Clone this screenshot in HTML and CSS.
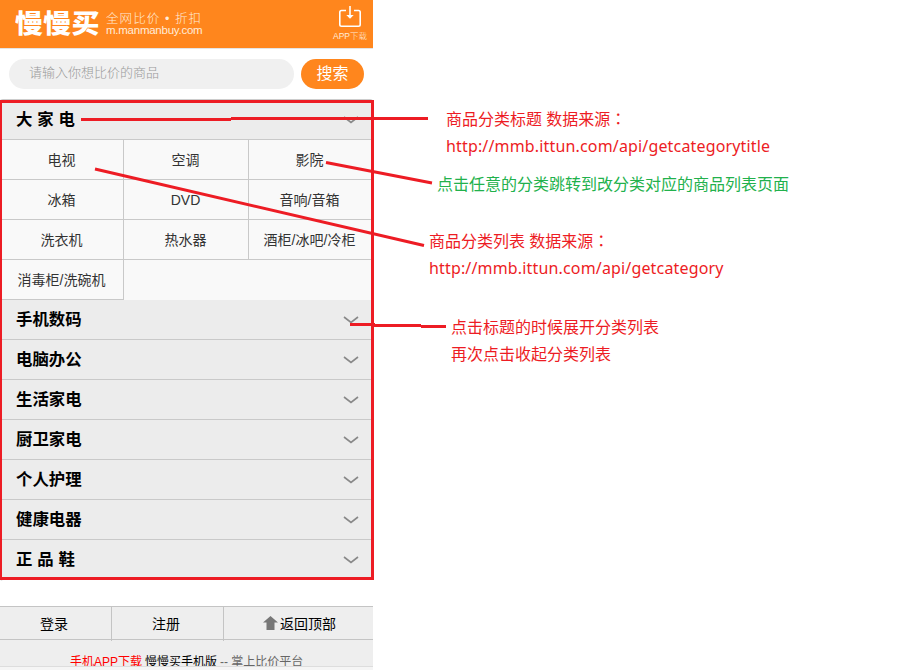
FILE: index.html
```html
<!DOCTYPE html>
<html lang="zh-CN">
<head>
<meta charset="utf-8">
<title>慢慢买</title>
<link rel="stylesheet" href="styles.css">
</head>
<body>
<div class="phone">
  <header class="top">
    <div class="logo">慢慢买</div>
    <div class="slogan"><div class="slogan-cn">全网比价 • 折扣</div><div class="slogan-en">m.manmanbuy.com</div></div>
    <div class="app">
      <svg width="24" height="24" viewBox="0 0 24 24" fill="none" stroke="#fff" stroke-width="1.6"><path d="M8 5.500H3.500Q1.800 5.500 1.800 7.200V19.500Q1.800 21.200 3.500 21.200H20.500Q22.200 21.200 22.200 19.500V7.200Q22.200 5.500 20.500 5.500H16"/><path d="M12 1V12"/><path d="M8.300 10H15.700L12 13.800Z" fill="#fff" stroke="none"/></svg>
      <div class="app-text">APP下载</div>
    </div>
  </header>
  <div class="search"><div class="field">请输入你想比价的商品</div><div class="button">搜索</div></div>
  <main class="categories">
    <div class="title"><span class="spaced">大 家 电</span><svg class="chevron" width="16" height="8" viewBox="0 0 16 8"><path d="M1 1L8 6.500L15 1"/></svg></div>
    <div class="grid">
      <div class="cell">电视</div><div class="cell">空调</div><div class="cell wide">影院</div>
      <div class="cell">冰箱</div><div class="cell">DVD</div><div class="cell wide">音响/音箱</div>
      <div class="cell">洗衣机</div><div class="cell">热水器</div><div class="cell wide">酒柜/冰吧/冷柜</div>
      <div class="cell">消毒柜/洗碗机</div>
    </div>
    <div class="title"><span>手机数码</span><svg class="chevron" width="16" height="8" viewBox="0 0 16 8"><path d="M1 1L8 6.500L15 1"/></svg></div>
    <div class="title"><span>电脑办公</span><svg class="chevron" width="16" height="8" viewBox="0 0 16 8"><path d="M1 1L8 6.500L15 1"/></svg></div>
    <div class="title"><span>生活家电</span><svg class="chevron" width="16" height="8" viewBox="0 0 16 8"><path d="M1 1L8 6.500L15 1"/></svg></div>
    <div class="title"><span>厨卫家电</span><svg class="chevron" width="16" height="8" viewBox="0 0 16 8"><path d="M1 1L8 6.500L15 1"/></svg></div>
    <div class="title"><span>个人护理</span><svg class="chevron" width="16" height="8" viewBox="0 0 16 8"><path d="M1 1L8 6.500L15 1"/></svg></div>
    <div class="title"><span>健康电器</span><svg class="chevron" width="16" height="8" viewBox="0 0 16 8"><path d="M1 1L8 6.500L15 1"/></svg></div>
    <div class="title"><span class="spaced">正 品 鞋</span><svg class="chevron" width="16" height="8" viewBox="0 0 16 8"><path d="M1 1L8 6.500L15 1"/></svg></div>
  </main>
  <footer class="footer">
    <nav class="links">
      <div class="link">登录</div><div class="link">注册</div>
      <div class="link last"><svg width="16" height="14" viewBox="0 0 16 14"><path d="M7.500 0L15 6.500H11.500V14H3.500V6.500H0Z" fill="#777"/></svg>返回顶部</div>
    </nav>
    <div class="download"><span class="red">手机APP下载</span><span class="brand">慢慢买手机版</span><span class="note">-- 掌上比价平台</span></div>
    <div class="edge"></div>
  </footer>
</div>
<svg class="marks" width="921" height="670" viewBox="0 0 921 670">
  <rect x="0.500" y="101.500" width="372" height="477"/>
  <path d="M81 119.500H231M231 118.500H428M95 169L424 245.500M326 162.500L432 183M350 324.500H375M374 325.500H421M421 326.500H446"/>
</svg>
<div class="notes note-title"><span>商品分类标题 数据来源<span class="colon" lang="zh-TW">：</span></span><span class="url">http://mmb.ittun.com/api/getcategorytitle</span></div>
<div class="notes note-jump">点击任意的分类跳转到改分类对应的商品列表页面</div>
<div class="notes note-list"><span>商品分类列表 数据来源<span class="colon" lang="zh-TW">：</span></span><span class="url">http://mmb.ittun.com/api/getcategory</span></div>
<div class="notes note-toggle"><span>点击标题的时候展开分类列表</span><span>再次点击收起分类列表</span></div>
</body>
</html>
```
FILE: styles.css
```css
* { box-sizing: border-box; }
body {
  margin: 0;
  width: 921px;
  height: 670px;
  overflow: hidden;
  position: relative;
  background: #fff;
  color: #000;
  font-family: "Liberation Sans", "Noto Sans CJK SC", sans-serif;
  white-space: nowrap;
}
.phone { width: 373px; height: 670px; display: flex; flex-direction: column; }
.top {
  height: 49px;
  flex: none;
  display: flex;
  padding-left: 15px;
  color: #fff;
  background: #ff861d;
  border-bottom: 1px solid #e4e4e4;
}
.logo { width: 91px; font-size: 28px; line-height: 44px; font-weight: 900; letter-spacing: 0.300px; font-family: "Noto Sans CJK SC", sans-serif; transform: scaleY(0.92); transform-origin: 0 22px; }
.slogan { width: 217px; padding-top: 12px; color: #ffebd9; }
.slogan-cn { font-size: 12.500px; line-height: 14px; letter-spacing: 1.100px; font-weight: 300; }
.slogan-en { font-size: 11.500px; line-height: 9px; letter-spacing: -0.250px; }
.app { width: 50px; display: flex; flex-direction: column; align-items: center; padding: 5px 0 0 4px; }
.app-text { font-size: 8.500px; line-height: 14px; font-weight: 300; color: #ffebd9; }
.search { height: 50px; flex: none; display: flex; gap: 7px; padding: 10px 9px; }
.field { width: 285px; height: 30px; border-radius: 15px; background: #f0f0f0; color: #999; padding-left: 20px; font-size: 13px; line-height: 28px; font-weight: 300; }
.button { width: 63px; height: 30px; border-radius: 15px; background: #ff861d; color: #fff; font-size: 16px; line-height: 29px; text-align: center; }
.categories { height: 482px; flex: none; border-top: 1px solid #ccc; border-left: 1px solid #ccc; border-radius: 3px; }
.title {
  height: 40px;
  display: flex;
  align-items: center;
  justify-content: space-between;
  padding: 0 14px 0 15px;
  background: #ececec;
  border-bottom: 1px solid #c9c9c9;
  font-size: 16.400px;
  line-height: 20px;
  font-weight: 700;
}
.title span { padding-bottom: 1px; }
.spaced { word-spacing: 0.300px; }
.chevron { fill: none; stroke: #888; stroke-width: 1.600; }
.grid { display: grid; grid-template-columns: 123px 125px 124px; grid-auto-rows: 40px; background: #f9f9f9; }
.cell { border-right: 1px solid #c9c9c9; border-bottom: 1px solid #c9c9c9; padding-right: 1px; color: #333; font-size: 14px; line-height: 40px; text-align: center; }
.wide { border-right: 0; padding-right: 3px; }
.footer { margin-top: 25px; flex: 1; background: #eee; }
.links { height: 34px; display: flex; border-top: 1px solid #c4c4c4; border-bottom: 1px solid #c4c4c4; }
.link { width: 112px; height: 34px; border-right: 1px solid #c4c4c4; padding-right: 3px; font-size: 14px; line-height: 34px; text-align: center; }
.last { width: 149px; border: 0; padding-right: 0; padding-left: 2px; display: flex; justify-content: center; }
.last svg { margin-top: 9px; margin-right: 1px; }
.download { height: 26px; overflow: hidden; display: flex; padding: 13px 0 0 70px; font-size: 12px; line-height: 18px; }
.red { width: 75px; color: #f00; }
.brand { width: 75px; }
.note { color: #666; }
.edge { height: 4px; background: #f5f5f5; border-top: 1px solid #ddd; }
.marks { position: absolute; left: 0; top: 0; fill: none; stroke: #ed1c24; stroke-width: 3; }
.notes { position: absolute; display: flex; flex-direction: column; font-family: "Noto Sans", "Noto Sans CJK SC", sans-serif; font-size: 16px; line-height: 27px; color: #ed1c24; }
.url { letter-spacing: 0.160px; }
.colon { font-family: "Noto Sans CJK TC", sans-serif; line-height: 1; }
.note-title { left: 446px; top: 106px; }
.note-jump { left: 437px; top: 171px; color: #22b14c; }
.note-list { left: 429px; top: 228px; }
.note-toggle { left: 451px; top: 314px; }
```
